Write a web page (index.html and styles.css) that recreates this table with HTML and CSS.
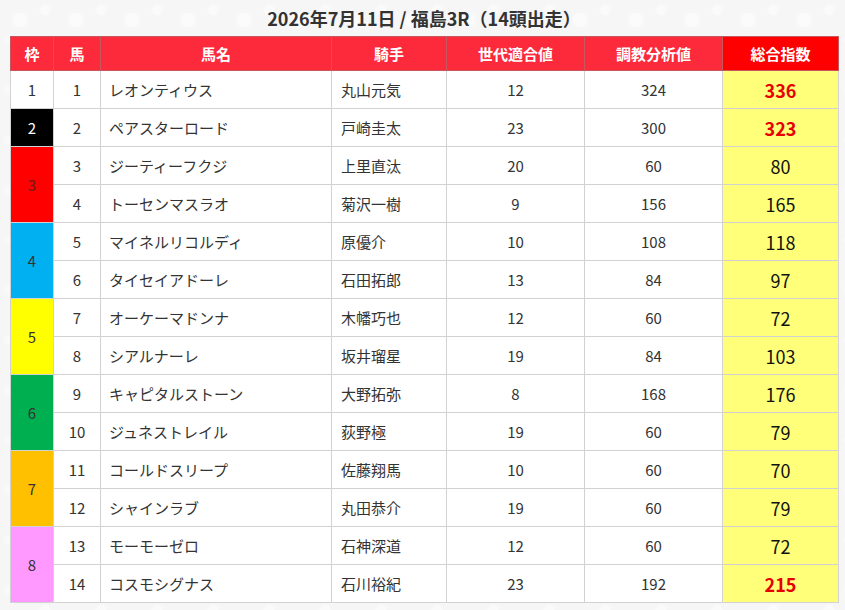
FILE: index.html
```html
<!DOCTYPE html>
<html lang="ja">
<head>
<meta charset="utf-8">
<title>福島3R</title>
<link rel="stylesheet" href="styles.css">
</head>
<body>
<div class="page">
  <h1 class="title">2026年7月11日 / 福島3R（14頭出走）</h1>
  <table class="race">
    <colgroup>
      <col class="c-waku"><col class="c-uma"><col class="c-name"><col class="c-jockey"><col class="c-gen"><col class="c-train"><col class="c-total">
    </colgroup>
    <thead>
      <tr>
        <th>枠</th><th>馬</th><th>馬名</th><th>騎手</th><th>世代適合値</th><th>調教分析値</th><th class="th-total">総合指数</th>
      </tr>
    </thead>
    <tbody>
      <tr><td class="waku w1">1</td><td class="num">1</td><td class="name">レオンティウス</td><td class="jockey">丸山元気</td><td class="num">12</td><td class="num">324</td><td class="total top">336</td></tr>
      <tr><td class="waku w2">2</td><td class="num">2</td><td class="name">ペアスターロード</td><td class="jockey">戸崎圭太</td><td class="num">23</td><td class="num">300</td><td class="total top">323</td></tr>
      <tr><td class="waku w3" rowspan="2">3</td><td class="num">3</td><td class="name">ジーティーフクジ</td><td class="jockey">上里直汰</td><td class="num">20</td><td class="num">60</td><td class="total">80</td></tr>
      <tr><td class="num">4</td><td class="name">トーセンマスラオ</td><td class="jockey">菊沢一樹</td><td class="num">9</td><td class="num">156</td><td class="total">165</td></tr>
      <tr><td class="waku w4" rowspan="2">4</td><td class="num">5</td><td class="name">マイネルリコルディ</td><td class="jockey">原優介</td><td class="num">10</td><td class="num">108</td><td class="total">118</td></tr>
      <tr><td class="num">6</td><td class="name">タイセイアドーレ</td><td class="jockey">石田拓郎</td><td class="num">13</td><td class="num">84</td><td class="total">97</td></tr>
      <tr><td class="waku w5" rowspan="2">5</td><td class="num">7</td><td class="name">オーケーマドンナ</td><td class="jockey">木幡巧也</td><td class="num">12</td><td class="num">60</td><td class="total">72</td></tr>
      <tr><td class="num">8</td><td class="name">シアルナーレ</td><td class="jockey">坂井瑠星</td><td class="num">19</td><td class="num">84</td><td class="total">103</td></tr>
      <tr><td class="waku w6" rowspan="2">6</td><td class="num">9</td><td class="name">キャピタルストーン</td><td class="jockey">大野拓弥</td><td class="num">8</td><td class="num">168</td><td class="total">176</td></tr>
      <tr><td class="num">10</td><td class="name">ジュネストレイル</td><td class="jockey">荻野極</td><td class="num">19</td><td class="num">60</td><td class="total">79</td></tr>
      <tr><td class="waku w7" rowspan="2">7</td><td class="num">11</td><td class="name">コールドスリープ</td><td class="jockey">佐藤翔馬</td><td class="num">10</td><td class="num">60</td><td class="total">70</td></tr>
      <tr><td class="num">12</td><td class="name">シャインラブ</td><td class="jockey">丸田恭介</td><td class="num">19</td><td class="num">60</td><td class="total">79</td></tr>
      <tr><td class="waku w8" rowspan="2">8</td><td class="num">13</td><td class="name">モーモーゼロ</td><td class="jockey">石神深道</td><td class="num">12</td><td class="num">60</td><td class="total">72</td></tr>
      <tr><td class="num">14</td><td class="name">コスモシグナス</td><td class="jockey">石川裕紀</td><td class="num">23</td><td class="num">192</td><td class="total top">215</td></tr>
    </tbody>
  </table>
</div>
</body>
</html>
```

FILE: styles.css
```css
html, body {
  margin: 0;
  padding: 0;
}
body {
  background-color: #f6f6f6;
  background-image:
    radial-gradient(circle at 20px 20px, rgba(255,255,255,0.55) 0 7px, transparent 8px),
    radial-gradient(circle at 45px 10px, rgba(255,255,255,0.4) 0 5px, transparent 6px),
    radial-gradient(circle at 8px 40px, rgba(255,255,255,0.35) 0 4px, transparent 5px);
  background-size: 56px 50px;
  font-family: "Noto Sans CJK JP", "Noto Sans", sans-serif;
  color: #333;
}
.page {
  width: 828px;
  padding: 0 7px 0 10px;
}
.title {
  margin: 0;
  height: 36px;
  line-height: 36px;
  font-size: 18px;
  font-weight: bold;
  text-align: center;
  color: #333;
}
.race {
  width: 828px;
  border-collapse: collapse;
  table-layout: fixed;
  background: #fff;
}
.c-waku { width: 43px; }
.c-uma { width: 47px; }
.c-name { width: 231px; }
.c-jockey { width: 115px; }
.c-gen { width: 138px; }
.c-train { width: 138px; }
.c-total { width: 116px; }

.race th {
  height: 33px;
  padding: 0;
  background: #fc2a3b;
  color: #fff;
  font-size: 15px;
  font-weight: bold;
  border: 1px solid #c4585c;
  text-align: center;
  vertical-align: middle;
}
.race th.th-total {
  background: #ff0000;
}
.race td {
  height: 37px;
  padding: 0;
  border: 1px solid #d2d2d2;
  font-size: 15px;
  color: #333;
  vertical-align: middle;
  line-height: 1;
}
.race td.num,
.race td.waku {
  text-align: center;
}
.race td.name {
  padding-left: 8px;
}
.race td.jockey {
  padding-left: 9px;
}
.race td.total {
  background: #ffff7a;
  text-align: center;
  font-size: 18px;
  color: #111;
}
.race td.total.top {
  color: #e60000;
  font-weight: bold;
}
.w1 { background: #fff; }
.race td.w2 { background: #000; color: #fff; }
.w3 { background: #ff0000; }
.w4 { background: #00b0f0; }
.w5 { background: #ffff00; }
.w6 { background: #00b050; }
.w7 { background: #ffc000; }
.w8 { background: #ff99ff; }
.race td.w3 { color: #6b1a1a; }
```
